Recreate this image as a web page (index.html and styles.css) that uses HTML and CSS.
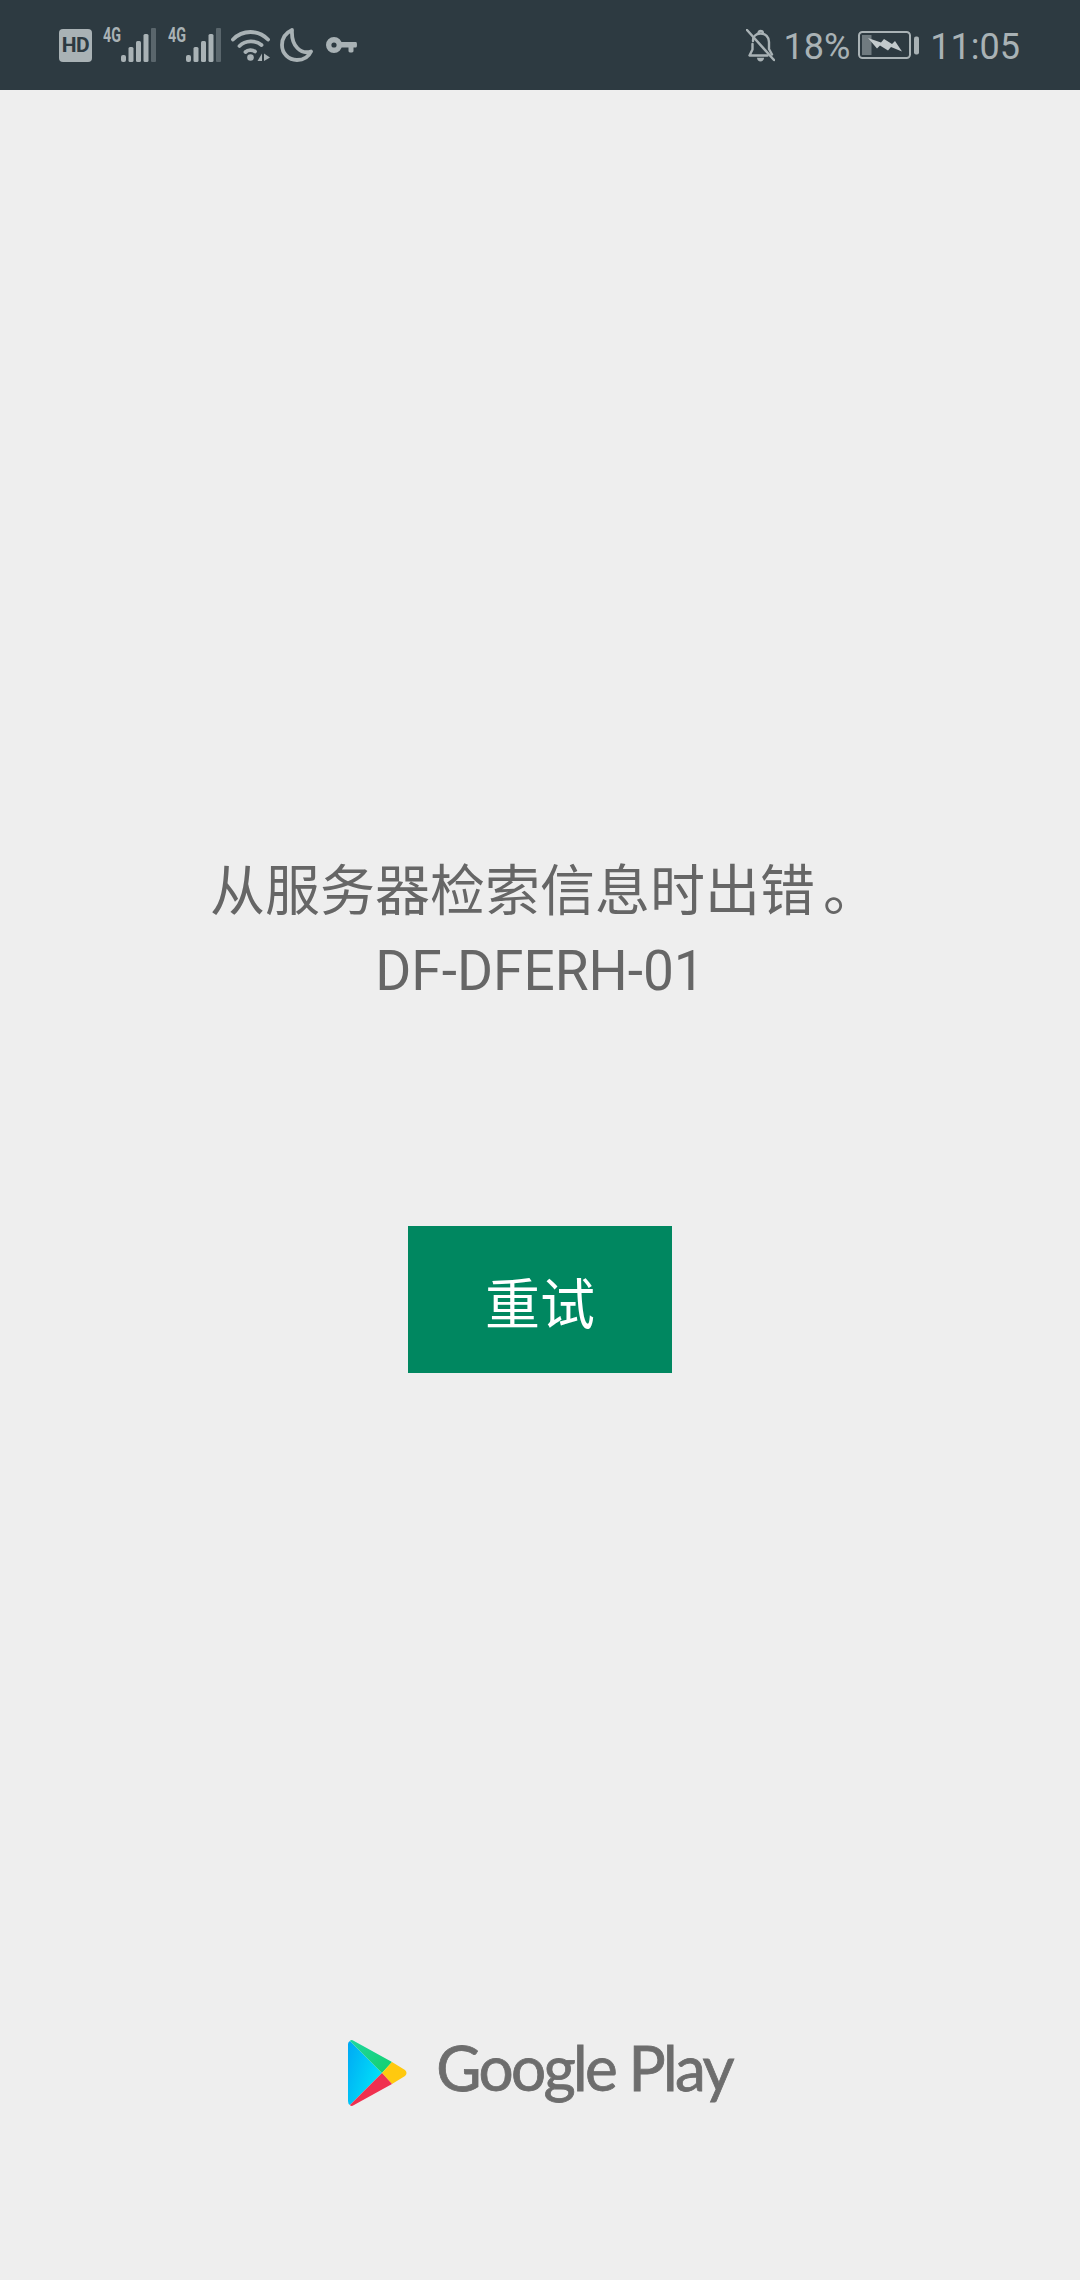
FILE: index.html
```html
<!DOCTYPE html>
<html lang="zh">
  <head>
    <meta charset="UTF-8">
    <title>Google Play</title>
    <link rel="stylesheet" href="styles.css">
  </head>

  <body>
    <!-- STATUS BAR -->
    <div class="status-bar">
      <div class="status-group">
        <span class="icon-hd">HD</span>
        <svg class="icon-signal" width="53" height="46" viewBox="0 -6 53 46">
          <text x="0" y="14" textLength="18" lengthAdjust="spacingAndGlyphs" class="net-text">4G</text>
          <rect x="18" y="27" width="5" height="7" rx="2" fill="#a9b2b5"/>
          <rect x="25.500" y="19" width="5" height="15" rx="1.500" fill="#a9b2b5"/>
          <rect x="33" y="13" width="5" height="21" rx="1.500" fill="#a9b2b5"/>
          <rect x="40.500" y="6" width="5" height="28" rx="1.500" fill="#a9b2b5"/>
          <rect x="48" y="0" width="5" height="34" rx="1" fill="#5a666c"/>
        </svg>
        <svg class="icon-signal-2" width="53" height="46" viewBox="0 -6 53 46">
          <text x="0" y="14" textLength="18" lengthAdjust="spacingAndGlyphs" class="net-text">4G</text>
          <rect x="18" y="27" width="5" height="7" rx="2" fill="#a9b2b5"/>
          <rect x="25.500" y="19" width="5" height="15" rx="1.500" fill="#a9b2b5"/>
          <rect x="33" y="13" width="5" height="21" rx="1.500" fill="#a9b2b5"/>
          <rect x="40.500" y="6" width="5" height="28" rx="1.500" fill="#a9b2b5"/>
          <rect x="48" y="0" width="5" height="34" rx="1" fill="#5a666c"/>
        </svg>
        <svg class="icon-wifi" width="39" height="32" viewBox="0 0 39 32">
          <g fill="none" stroke="#a9b2b5" stroke-width="3.800" stroke-linecap="round">
            <path d="M2 10.500C11.500 .5 27.500 .5 37 10.500"/>
            <path d="M8.500 17C14.500 11 24.500 11 30.500 16"/>
            <path d="M14.500 23C17 20.700 21.500 20.700 24 22.500"/>
          </g>
          <circle cx="19.500" cy="28.500" r="3.300" fill="#a9b2b5"/>
          <path d="M31 24.500V32H26.500Z" fill="#a9b2b5"/>
          <path d="M33 24.500L39 28.500L33 32Z" fill="#a9b2b5"/>
        </svg>
        <svg class="icon-moon" width="33" height="34" viewBox="0 0 33 34">
          <path d="M12 2C5.500 5 2 10.500 2 17C2 25.500 8.500 32 17 32C23.500 32 28.500 29 31 23.500C21.500 26.500 11 19 12 2Z" fill="none" stroke="#a9b2b5" stroke-width="3.800" stroke-linejoin="round"/>
        </svg>
        <svg class="icon-key" width="31" height="16" viewBox="0 0 31 16">
          <circle cx="8" cy="8" r="5.300" fill="none" stroke="#a9b2b5" stroke-width="5.400"/>
          <path d="M14 5H30C31.300 5 31.300 10.500 30 10.500H27.500V14C27.500 16 22.500 16 22.500 14V10.500H14Z" fill="#a9b2b5"/>
        </svg>
      </div>

      <div class="status-group">
        <svg class="icon-bell" width="29" height="33" viewBox="0 0 29 33">
          <g fill="none" stroke="#a9b2b5" stroke-width="2.400" stroke-linejoin="round" stroke-linecap="round">
            <path d="M7 12C7 7.500 10 4.500 14.500 4.500C19.500 4.500 23 8 23 13V20L26 25.500"/>
            <path d="M6.500 15V20.500L3.500 26.500H21.500"/>
            <path d="M1 1L28 31"/>
            <path d="M12.500 4.500C12.500 1 17 1 17 4.500"/>
          </g>
          <path d="M11 28.800H18C18 33.600 11 33.600 11 28.800Z" fill="#a9b2b5"/>
        </svg>
        <span class="status-text status-percent">18%</span>
        <svg class="icon-battery" width="61" height="28" viewBox="0 0 61 28">
          <rect x="1" y="1" width="51" height="26" rx="3.500" fill="none" stroke="#a9b2b5" stroke-width="2"/>
          <rect x="4" y="4" width="9.500" height="20" fill="#707b80"/>
          <path d="M10 7L23 11.500L26 8L34 13L37 10L44 20.500L33 16L30 19.500L22 14.500L19 17.500Z" fill="#c3cacc"/>
          <rect x="56" y="5.500" width="5" height="18" rx="2" fill="#a9b2b5"/>
        </svg>
        <span class="status-text status-time">11:05</span>
      </div>
    </div>

    <!-- ERROR MESSAGE -->
    <div class="error-page">
      <p class="error-text">从服务器检索信息时出错<span class="full-stop">。</span><br>DF-DFERH-01</p>
      <a class="retry-button">重试</a>

      <div class="play-logo">
        <svg width="60" height="68" viewBox="0 0 60 68">
          <defs>
            <linearGradient id="play-blue" x1="0" y1="0" x2="1" y2="0.6">
              <stop offset="0" stop-color="#00a8f4"/>
              <stop offset="1" stop-color="#00e4f8"/>
            </linearGradient>
            <linearGradient id="play-green" x1="0" y1="0" x2="1" y2="1">
              <stop offset="0" stop-color="#1fd6a0"/>
              <stop offset="1" stop-color="#12d06c"/>
            </linearGradient>
          </defs>
          <path d="M2 2L34 34L2 66Q0 65 0 62V5Q0 3 2 2Z" fill="url(#play-blue)"/>
          <path d="M2 2Q3 0 6 2L44 23L34 34Z" fill="url(#play-green)"/>
          <path d="M44 23L57 31Q60 34 57 37L44 45L34 34Z" fill="#ffc90f"/>
          <path d="M34 34L44 45L6 66Q3 68 2 66Z" fill="#f0304f"/>
        </svg>
        <span class="play-name">Google Play</span>
      </div>
    </div>
  </body>
</html>
```

FILE: styles.css
```css
/* CSS styles */
* {
  box-sizing: border-box;
}

body {
  margin: 0;
  height: 2280px;
  display: flex;
  flex-direction: column;
  background-color: #eeeeee;
  font-family: Roboto, "Noto Sans CJK SC", sans-serif;
}

svg {
  display: block;
  flex-shrink: 0;
}

/* status bar */
.status-bar {
  height: 90px;
  padding: 0 60px 0 59px;
  display: flex;
  justify-content: space-between;
  align-items: center;
  background-color: #2d3a41;
}

.status-group {
  display: flex;
  align-items: center;
}

.icon-hd {
  width: 33px;
  height: 33px;
  display: flex;
  align-items: center;
  justify-content: center;
  border-radius: 4px;
  background-color: #a9b2b5;
  color: #2d3a41;
  font-size: 21px;
  font-weight: 700;
  letter-spacing: -0.5px;
}

.icon-signal {
  margin-left: 11px;
}

.icon-signal-2 {
  margin-left: 12px;
}

.icon-wifi,
.icon-moon {
  margin-left: 10px;
}

.icon-key {
  margin-left: 13px;
}

.net-text {
  font-family: Roboto, sans-serif;
  font-size: 20px;
  font-weight: 700;
  fill: #a9b2b5;
}

.status-text {
  font-size: 36px;
  line-height: 40px;
  padding-top: 3px;
  color: #a9b2b5;
}

.status-percent {
  margin-left: 9px;
}

.icon-battery {
  margin-left: 8px;
}

.status-time {
  margin-left: 11px;
}

/* main area */
.error-page {
  flex: 1;
  padding: 761px 0 167px;
  display: flex;
  flex-direction: column;
  align-items: center;
}

.error-text {
  margin: 0;
  font-size: 55px;
  line-height: 80px;
  text-align: center;
  white-space: nowrap;
  color: #666666;
}

.full-stop {
  margin-left: 8px;
  margin-right: -8px;
}

.retry-button {
  width: 264px;
  height: 147px;
  margin-top: 215px;
  display: flex;
  align-items: center;
  justify-content: center;
  background-color: #008760;
  color: white;
  font-size: 55px;
}

.play-logo {
  margin-top: auto;
  display: flex;
  align-items: center;
  gap: 28px;
}

.play-name {
  margin-bottom: 12px;
  font-family: Lato, sans-serif;
  font-size: 62px;
  line-height: 68px;
  color: #6d6d6d;
  letter-spacing: -2.6px;
  -webkit-text-stroke: 0.8px #6d6d6d;
}
```
